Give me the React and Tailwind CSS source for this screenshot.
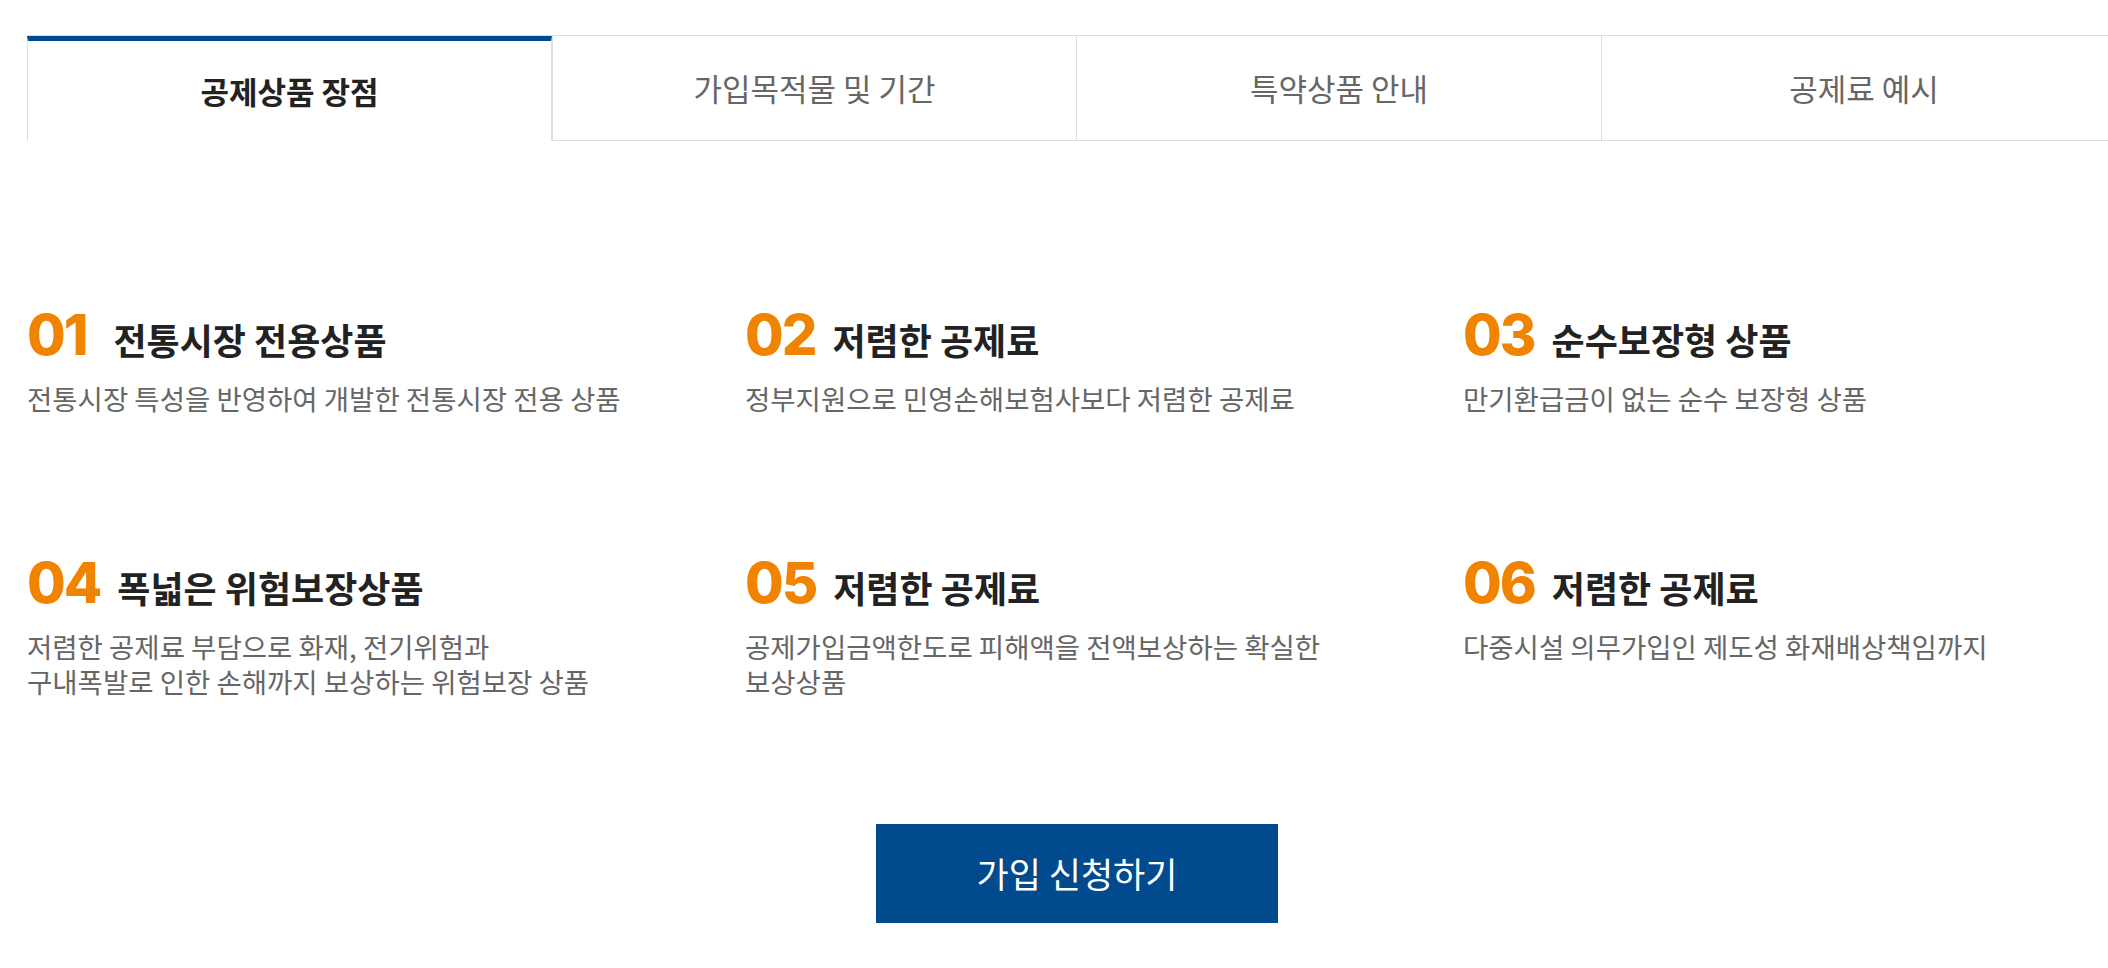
import { useState } from "react"

const tabs = ["공제상품 장점", "가입목적물 및 기간", "특약상품 안내", "공제료 예시"]

const points = [
  { no: "01", title: "전통시장 전용상품", desc: ["전통시장 특성을 반영하여 개발한 전통시장 전용 상품"] },
  { no: "02", title: "저렴한 공제료", desc: ["정부지원으로 민영손해보험사보다 저렴한 공제료"] },
  { no: "03", title: "순수보장형 상품", desc: ["만기환급금이 없는 순수 보장형 상품"] },
  { no: "04", title: "폭넓은 위험보장상품", desc: ["저렴한 공제료 부담으로 화재, 전기위험과", "구내폭발로 인한 손해까지 보상하는 위험보장 상품"] },
  { no: "05", title: "저렴한 공제료", desc: ["공제가입금액한도로 피해액을 전액보상하는 확실한", "보상상품"] },
  { no: "06", title: "저렴한 공제료", desc: ["다중시설 의무가입인 제도성 화재배상책임까지"] },
]

const PointItem = ({ no, title, desc }) => (
  <div className="flex flex-col">
    <div className="flex items-baseline">
      <span className="font-['Inter',sans-serif] text-[56px] leading-none font-extrabold tracking-[-2px] text-[#f08300]">
        {no}
      </span>
      <span className={(no === "01" ? "ml-[27px]" : "ml-[17px]") + " text-[36px] leading-none font-bold text-[#222]"}>
        {title}
      </span>
    </div>
    <p className="mt-[18px] text-[27.5px] leading-[35px] text-[#666]">
      {desc.map((line, i) => (
        <span key={i}>
          {line}
          {i < desc.length - 1 && <br />}
        </span>
      ))}
    </p>
  </div>
)

const App = () => {
  const [active, setActive] = useState(0)

  return (
    <div className="w-full min-h-[968px] overflow-x-hidden bg-white font-['Noto_Sans_CJK_KR','Noto_Sans',sans-serif]">
      <div className="ml-[27px] w-[2100px] pt-[35px]">
        <ul className="flex border-t border-[#ddd]">
          {tabs.map((tab, i) => (
            <li key={tab} className="flex-1">
              <button
                type="button"
                onClick={() => setActive(i)}
                className={
                  i === active
                    ? "flex h-[105px] w-full items-center justify-center border-x border-t-[5px] border-x-[#ddd] border-t-[#004a8d] text-[31px] font-bold text-[#222]"
                    : i === active + 1
                      ? "flex h-[105px] w-full items-center justify-center border-x border-b border-[#ddd] text-[31px] text-[#666]"
                      : "flex h-[105px] w-full items-center justify-center border-r border-b border-[#ddd] text-[31px] text-[#666]"
                }
              >
                {tab}
              </button>
            </li>
          ))}
        </ul>

        <div className="mt-[166px] grid grid-cols-[repeat(3,665px)] gap-x-[53px] gap-y-[139px]">
          {points.map((p) => (
            <PointItem key={p.no} {...p} />
          ))}
        </div>

        <div className="mt-[125px] flex justify-center">
          <button
            type="button"
            className="flex h-[99px] w-[402px] items-center justify-center bg-[#004a8d] text-[35px] text-white"
          >
            가입 신청하기
          </button>
        </div>
      </div>
    </div>
  )
}

export default App
